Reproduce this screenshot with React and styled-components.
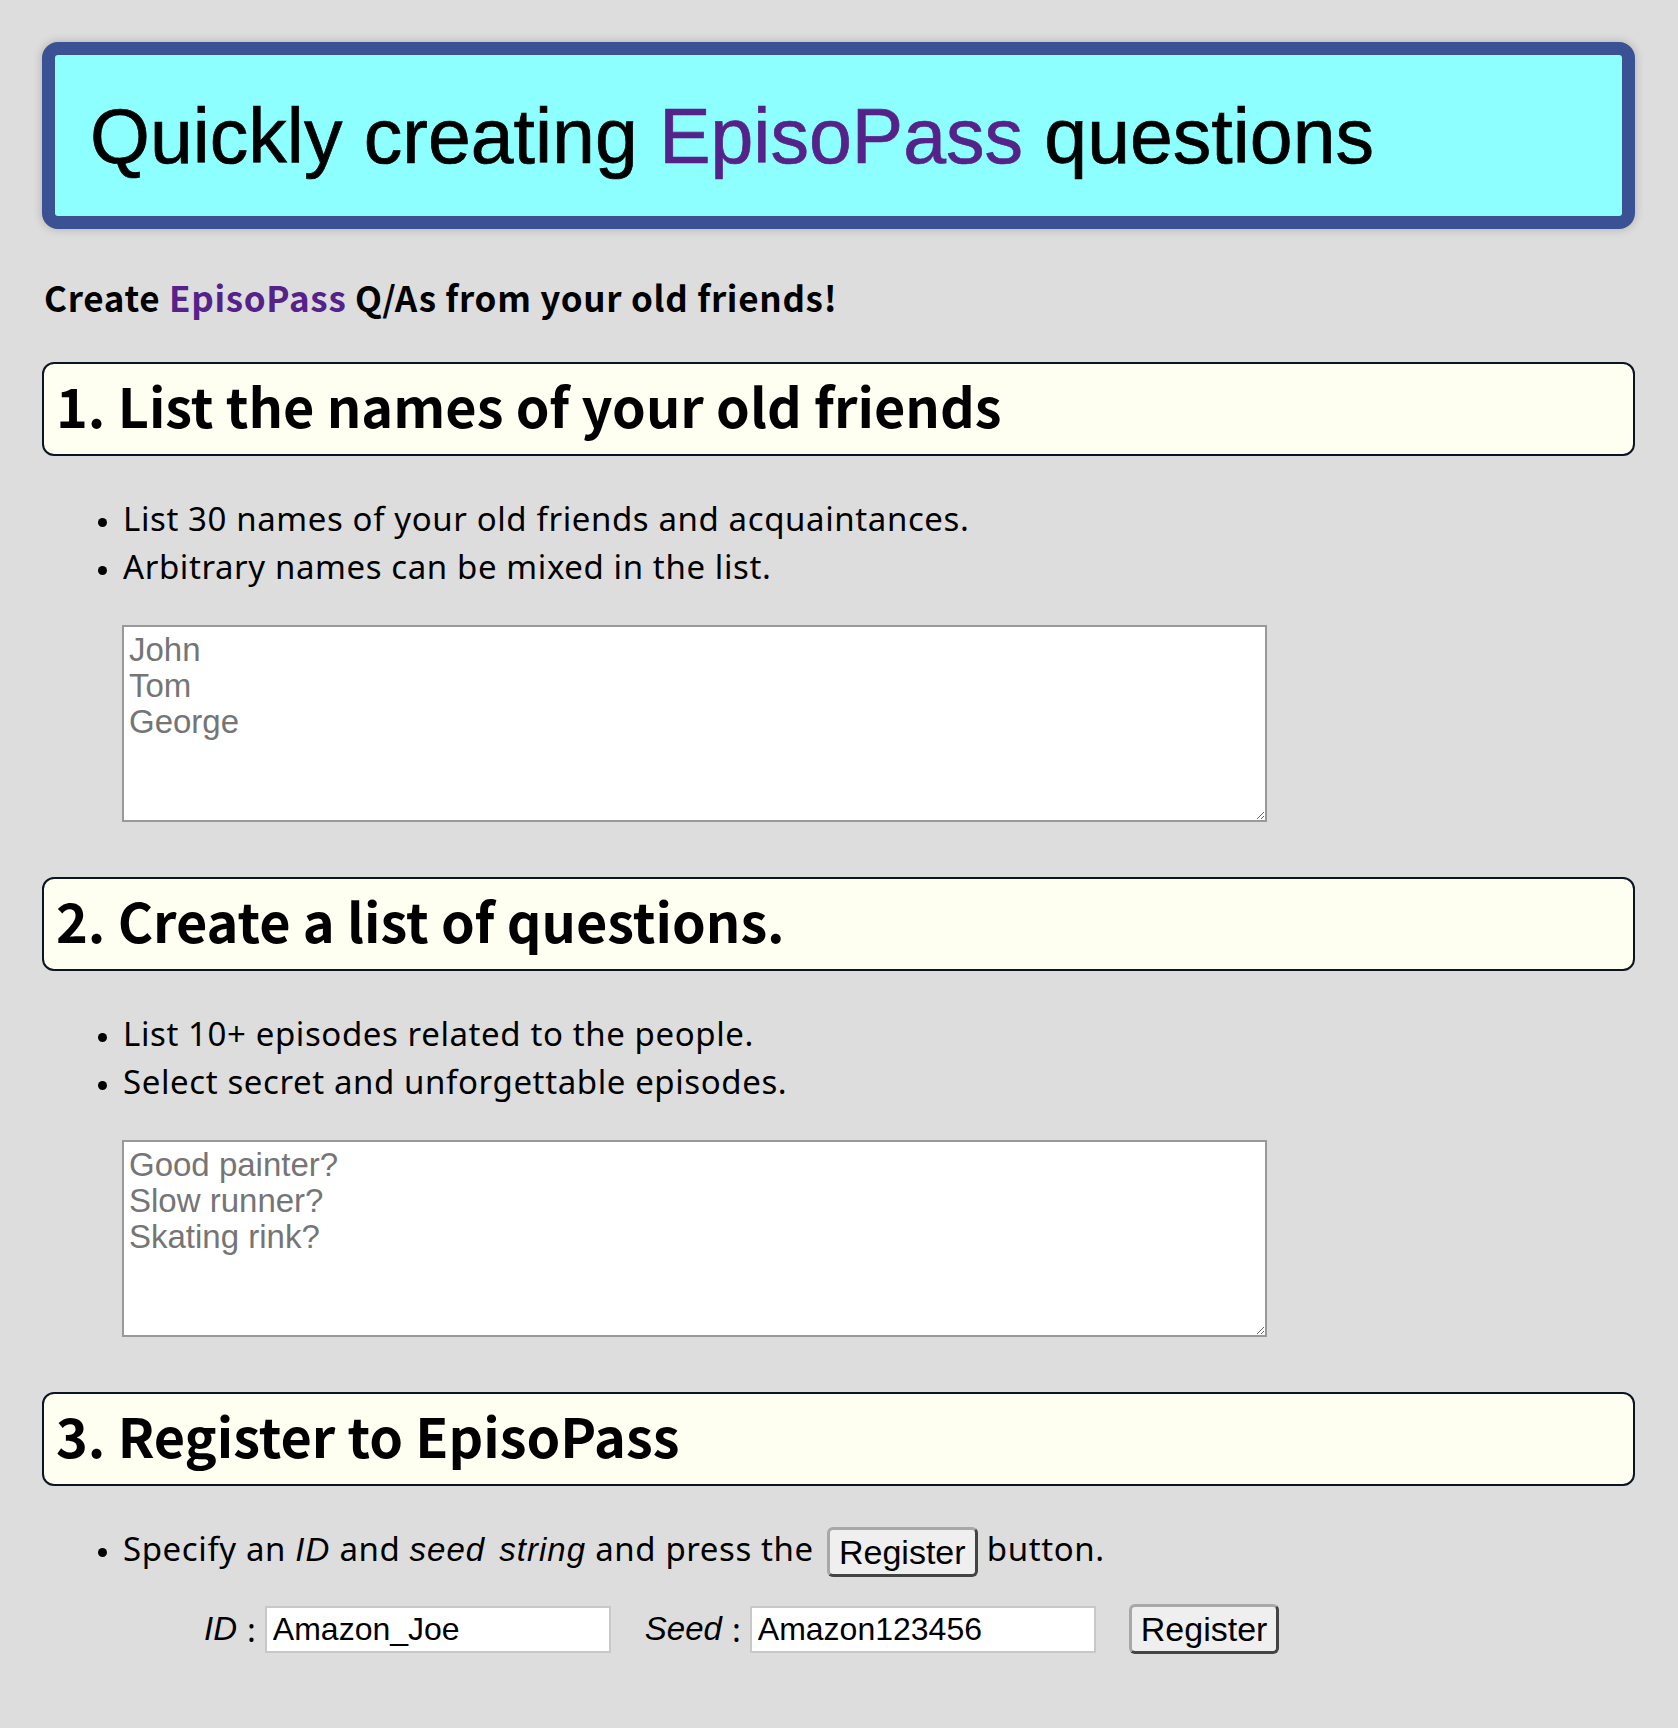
import React from "react";
import styled, { createGlobalStyle } from "styled-components";

const GlobalStyle = createGlobalStyle`
	html, body {
		margin: 0;
		padding: 0;
		background: #dddddd;
	}
	body {
		font-family: "Noto Sans", "Noto Sans CJK JP", sans-serif;
		color: #000;
	}
`;

const Page = styled.div`
	padding: 42px 43px 60px 42px;
`;

const Title = styled.h1`
	margin: 0;
	border: 13px solid #3a5294;
	border-radius: 16px;
	background: #8effff;
	box-shadow: 0 0 10px rgba(0, 0, 0, 0.22);
	padding: 36px 35px 35px;
	font-family: "Liberation Sans", Arial, sans-serif;
	font-weight: normal;
	font-size: 77px;
	line-height: 90px;
	-webkit-text-stroke: 0.7px currentColor;
`;

const Brand = styled.span`
	color: #55228a;
`;

const Lead = styled.p`
	margin: 44px 0 0 2px;
	font-family: "Noto Sans CJK JP", "Noto Sans", sans-serif;
	font-size: 35px;
	line-height: 48px;
	font-weight: bold;
	letter-spacing: 0.7px;
`;

const SectionHead = styled.h2`
	margin: ${({ $first }) => ($first ? "41px" : "55px")} 0 0;
	border: 2px solid #0a1422;
	border-radius: 12px;
	background: #fefff0;
	padding: 0 12px 9px;
	box-sizing: border-box;
	height: 94px;
	display: flex;
	align-items: center;
	font-family: "Noto Sans CJK JP", "Noto Sans", sans-serif;
	font-size: 54px;
	font-weight: bold;
`;

const Bullets = styled.ul`
	margin: 39px 0 0;
	padding-left: 81px;
	font-size: 33px;
	letter-spacing: 0.6px;
	line-height: 48px;

	li::marker {
		font-size: 26px;
	}
`;

const Em = styled.i`
	font-family: "Liberation Sans", Arial, sans-serif;
	font-style: italic;
	letter-spacing: 1px;
	word-spacing: 4px;
`;

const InlineButton = styled.button`
	box-sizing: border-box;
	height: 50px;
	font-family: "Liberation Sans", Arial, sans-serif;
	font-size: 34px;
	letter-spacing: 0;
	line-height: 40px;
	padding: 0 9px;
	margin: 0 0 0 ${({ $inline }) => ($inline ? "4px" : "0")};
	background: #efefef;
	color: #000;
	border: 3px solid;
	border-color: #a8a8a8 #444 #444 #a8a8a8;
	border-radius: 6px;
	vertical-align: middle;
`;

const Memo = styled.textarea`
	display: block;
	box-sizing: border-box;
	margin: 34px 0 0 80px;
	width: 1145px;
	height: 197px;
	padding: 5px 5px;
	border: 2px solid #999;
	background: #fff;
	font-family: "Liberation Sans", Arial, sans-serif;
	font-size: 33px;
	line-height: 36px;
	color: #000;

	&::placeholder {
		color: #757575;
	}
`;

const FormRow = styled.div`
	display: flex;
	align-items: center;
	margin: 27px 0 0 162px;
	font-size: 33px;
`;

const Label = styled.label`
	display: flex;
	align-items: center;
	margin-right: ${({ $gap }) => $gap || "0"};

	i {
		font-family: "Liberation Sans", Arial, sans-serif;
		margin-right: 10px;
	}
	span {
		margin-right: 9px;
	}
`;

const Field = styled.input`
	box-sizing: border-box;
	width: 346px;
	height: 47px;
	padding: 0 6px;
	border: 2px solid #c8c8c8;
	background: #fff;
	font-family: "Liberation Sans", Arial, sans-serif;
	font-size: 32px;
	color: #000;
`;

export default function App() {
	return (
		<Page>
			<GlobalStyle />
			<Title>
				Quickly creating <Brand>EpisoPass</Brand> questions
			</Title>

			<Lead>
				Create <Brand>EpisoPass</Brand> Q/As from your old friends!
			</Lead>

			<SectionHead $first>1. List the names of your old friends</SectionHead>
			<Bullets>
				<li>List 30 names of your old friends and acquaintances.</li>
				<li>Arbitrary names can be mixed in the list.</li>
			</Bullets>
			<Memo placeholder={"John\nTom\nGeorge"} />

			<SectionHead>2. Create a list of questions.</SectionHead>
			<Bullets>
				<li>List 10+ episodes related to the people.</li>
				<li>Select secret and unforgettable episodes.</li>
			</Bullets>
			<Memo placeholder={"Good painter?\nSlow runner?\nSkating rink?"} />

			<SectionHead>3. Register to EpisoPass</SectionHead>
			<Bullets>
				<li>
					Specify an <Em>ID</Em> and <Em>seed string</Em> and press the{" "}
					<InlineButton $inline>Register</InlineButton> button.
				</li>
			</Bullets>
			<FormRow>
				<Label $gap="34px">
					<i>ID</i>
					<span>:</span>
					<Field defaultValue="Amazon_Joe" />
				</Label>
				<Label $gap="33px">
					<i>Seed</i>
					<span>:</span>
					<Field defaultValue="Amazon123456" />
				</Label>
				<InlineButton>Register</InlineButton>
			</FormRow>
		</Page>
	);
}
